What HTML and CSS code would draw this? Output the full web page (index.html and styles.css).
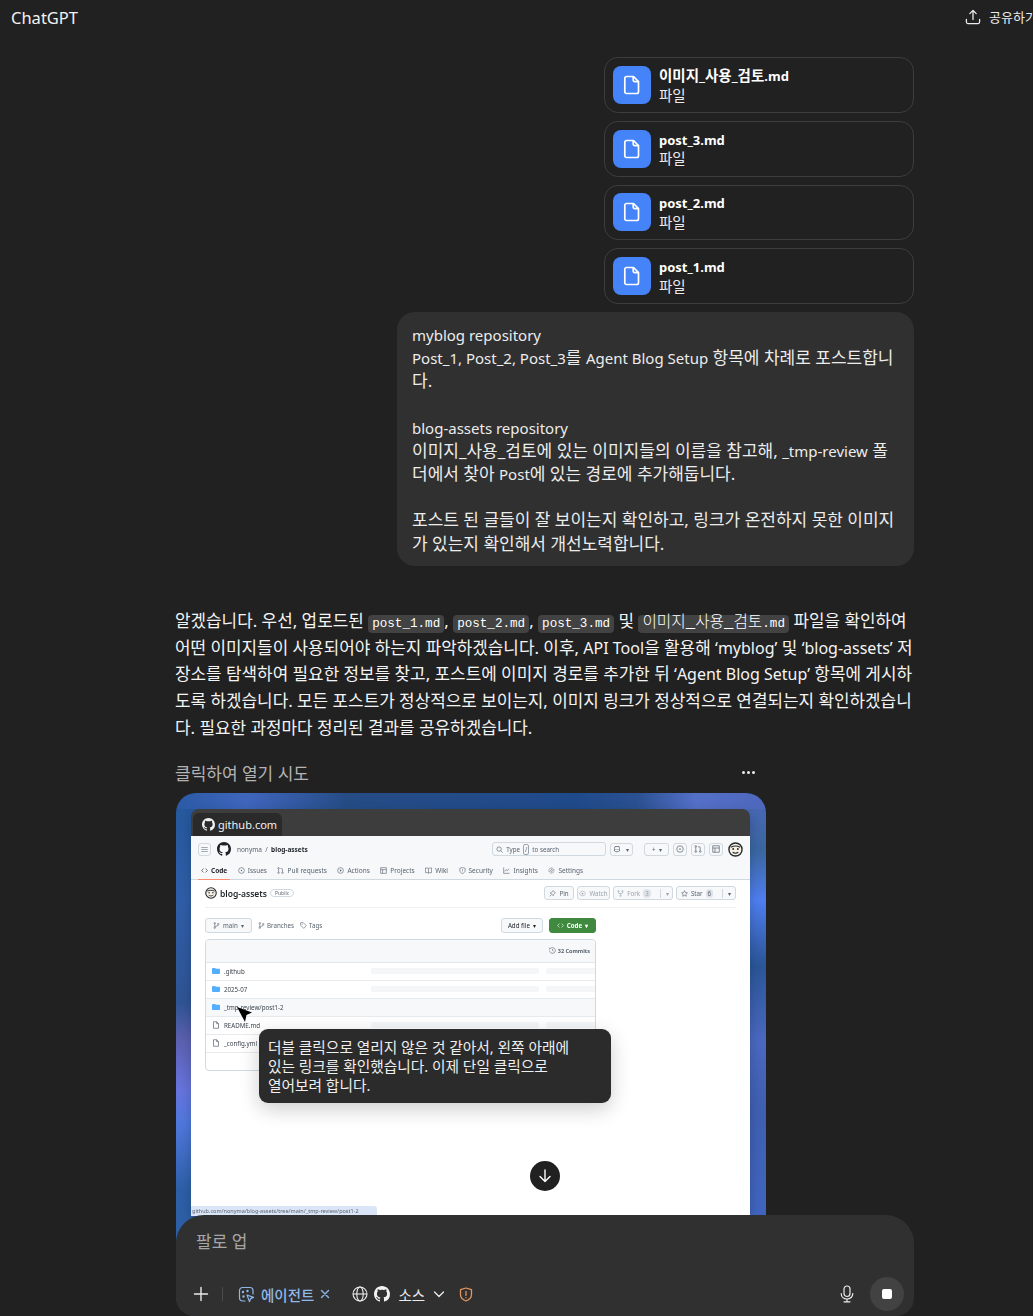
FILE: index.html
```html
<!DOCTYPE html>
<html lang="ko">
<head>
    <meta charset="UTF-8">
    <meta name="viewport" content="width=device-width, initial-scale=1.0">
    <title>ChatGPT</title>
    <link rel="stylesheet" href="styles.css">
</head>
<body>
    <svg class="sprite" width="0" height="0">
        <symbol id="i-github" viewBox="0 0 16 16"><path fill="currentColor" d="M8 0C3.58 0 0 3.58 0 8c0 3.54 2.29 6.53 5.47 7.59.4.07.55-.17.55-.38 0-.19-.01-.82-.01-1.49-2.01.37-2.53-.49-2.69-.94-.09-.23-.48-.94-.82-1.13-.28-.15-.68-.52-.01-.53.63-.01 1.08.58 1.23.82.72 1.21 1.87.87 2.33.66.07-.52.28-.87.51-1.07-1.78-.2-3.64-.89-3.64-3.95 0-.87.31-1.59.82-2.15-.08-.2-.36-1.02.08-2.12 0 0 .67-.21 2.2.82.64-.18 1.32-.27 2-.27s1.36.09 2 .27c1.53-1.04 2.2-.82 2.2-.82.44 1.1.16 1.92.08 2.12.51.56.82 1.27.82 2.15 0 3.07-1.87 3.75-3.65 3.95.29.25.54.73.54 1.48 0 1.07-.01 1.93-.01 2.2 0 .21.15.46.55.38A8 8 0 0 0 16 8c0-4.42-3.58-8-8-8z"/></symbol>
        <symbol id="i-file" viewBox="0 0 24 24"><path fill="none" stroke="currentColor" stroke-width="1.7" stroke-linejoin="round" d="M6.5 3.5h7l5 5.2v10.1a1.7 1.7 0 0 1-1.7 1.7H6.5a1.7 1.7 0 0 1-1.7-1.7V5.2a1.7 1.7 0 0 1 1.7-1.7z"/><path fill="none" stroke="currentColor" stroke-width="1.7" stroke-linejoin="round" d="M13.2 3.7v3.6a1.3 1.3 0 0 0 1.3 1.3h3.8"/></symbol>
        <symbol id="i-folder" viewBox="0 0 16 16"><path fill="currentColor" d="M1.75 2h4.2c.3 0 .55.12.75.33l1.1 1.17h6.45c.97 0 1.75.78 1.75 1.75v7c0 .97-.78 1.75-1.75 1.75H1.75C.78 14 0 13.22 0 12.25v-8.5C0 2.78.78 2 1.75 2z"/></symbol>
        <symbol id="i-doc" viewBox="0 0 16 16"><path fill="none" stroke="currentColor" stroke-width="1.4" d="M3 1.5h6.5l3.5 3.6v9.4H3zM9.3 1.7v3.6h3.6"/></symbol>
        <symbol id="i-face" viewBox="0 0 16 16"><circle cx="8" cy="8" r="7" fill="#f6f1e4" stroke="#24292f" stroke-width="1.5"/><path d="M3 5.5c3-1.5 7-1.5 10 0" fill="none" stroke="#24292f" stroke-width="1.2"/><circle cx="5.5" cy="7.5" r="1" fill="#24292f"/><circle cx="10.5" cy="7.5" r="1" fill="#24292f"/><path d="M5 11c2 1.2 4 1.2 6 0" fill="none" stroke="#24292f" stroke-width="1.1"/></symbol>
        <symbol id="n-code" viewBox="0 0 16 16"><path fill="none" stroke="currentColor" stroke-width="1.4" d="M5.5 3.5 1.5 8l4 4.5M10.5 3.5l4 4.5-4 4.5"/></symbol>
        <symbol id="n-issue" viewBox="0 0 16 16"><circle cx="8" cy="8" r="6.5" fill="none" stroke="currentColor" stroke-width="1.4"/><circle cx="8" cy="8" r="1.5" fill="currentColor"/></symbol>
        <symbol id="n-pr" viewBox="0 0 16 16"><g fill="none" stroke="currentColor" stroke-width="1.4"><circle cx="3.5" cy="3" r="1.7"/><circle cx="3.5" cy="13" r="1.7"/><circle cx="12.5" cy="13" r="1.7"/><path d="M3.5 5v6M12.5 11V5.5a2 2 0 0 0-2-2H8"/></g></symbol>
        <symbol id="n-play" viewBox="0 0 16 16"><circle cx="8" cy="8" r="6.5" fill="none" stroke="currentColor" stroke-width="1.4"/><path d="M6.5 5.2v5.6L11 8z" fill="currentColor"/></symbol>
        <symbol id="n-table" viewBox="0 0 16 16"><path fill="none" stroke="currentColor" stroke-width="1.4" d="M1.5 1.5h13v13h-13zM1.5 6h13M6 6v8.5"/></symbol>
        <symbol id="n-book" viewBox="0 0 16 16"><path fill="none" stroke="currentColor" stroke-width="1.4" d="M8 3.5C6.5 2.3 4 2 1 2.2v10.6c3-.2 5.5.1 7 1.2 1.5-1.1 4-1.4 7-1.2V2.2C12 2 9.5 2.3 8 3.5zM8 3.5V14"/></symbol>
        <symbol id="n-shield" viewBox="0 0 16 16"><path fill="none" stroke="currentColor" stroke-width="1.4" d="M8 1l6 2v5c0 3.5-3 6-6 7-3-1-6-3.5-6-7V3zM8 5v3.5M8 10.5v1"/></symbol>
        <symbol id="n-graph" viewBox="0 0 16 16"><path fill="none" stroke="currentColor" stroke-width="1.4" d="M1.5 1v13.5H15M4 10l3-4 3 2.5L14 4"/></symbol>
        <symbol id="n-gear" viewBox="0 0 16 16"><circle cx="8" cy="8" r="2.2" fill="none" stroke="currentColor" stroke-width="1.3"/><circle cx="8" cy="8" r="5.8" fill="none" stroke="currentColor" stroke-width="2" stroke-dasharray="2 1.6"/></symbol>
        <symbol id="n-branch" viewBox="0 0 16 16"><g fill="none" stroke="currentColor" stroke-width="1.4"><circle cx="4" cy="3" r="1.7"/><circle cx="4" cy="13" r="1.7"/><circle cx="12" cy="5" r="1.7"/><path d="M4 5v6M12 7c0 2.5-5 2-8 4"/></g></symbol>
        <symbol id="n-tag" viewBox="0 0 16 16"><path fill="none" stroke="currentColor" stroke-width="1.4" d="M1.5 1.5h6l7 7-6 6-7-7z"/><circle cx="5" cy="5" r="1" fill="currentColor"/></symbol>
        <symbol id="n-clock" viewBox="0 0 16 16"><path fill="none" stroke="currentColor" stroke-width="1.4" d="M1.5 8a6.5 6.5 0 1 0 2-4.7L1.5 5V1.5M8 4.5V8l2.5 1.5"/></symbol>
        <symbol id="n-search" viewBox="0 0 16 16"><circle cx="7" cy="7" r="5" fill="none" stroke="currentColor" stroke-width="1.5"/><path d="m11 11 4 4" stroke="currentColor" stroke-width="1.5"/></symbol>
        <symbol id="n-pin" viewBox="0 0 16 16"><path fill="none" stroke="currentColor" stroke-width="1.4" d="M9.5 1.5l5 5-2 1-2.5 3-.5 2.5L3 6.5l2.5-.5 3-2.5zM5.5 10.5l-4 4"/></symbol>
        <symbol id="n-eye" viewBox="0 0 16 16"><path fill="none" stroke="currentColor" stroke-width="1.4" d="M1 8c2-4 4.5-5 7-5s5 1 7 5c-2 4-4.5 5-7 5s-5-1-7-5z"/><circle cx="8" cy="8" r="2" fill="currentColor"/></symbol>
        <symbol id="n-fork" viewBox="0 0 16 16"><g fill="none" stroke="currentColor" stroke-width="1.4"><circle cx="3.5" cy="3" r="1.6"/><circle cx="12.5" cy="3" r="1.6"/><circle cx="8" cy="13" r="1.6"/><path d="M3.5 5v1.5A1.5 1.5 0 0 0 5 8h6a1.5 1.5 0 0 0 1.5-1.5V5M8 8v3"/></g></symbol>
        <symbol id="n-star" viewBox="0 0 16 16"><path fill="none" stroke="currentColor" stroke-width="1.4" d="m8 1.5 2 4.3 4.7.6-3.5 3.2.9 4.7L8 12l-4.1 2.3.9-4.7L1.3 6.4 6 5.8z"/></symbol>
        <symbol id="n-bot" viewBox="0 0 16 16"><path fill="none" stroke="currentColor" stroke-width="1.5" d="M4 3h8l1 4v5c-3 2-7 2-10 0V7z"/><circle cx="6" cy="9" r="1" fill="currentColor"/><circle cx="10" cy="9" r="1" fill="currentColor"/></symbol>
    </svg>

    <header class="topbar">
        <span class="brand">ChatGPT</span>
        <div class="share">
            <svg width="16" height="16" viewBox="0 0 16 16" fill="none" stroke="currentColor" stroke-width="1.3" stroke-linecap="round" stroke-linejoin="round"><path d="M8 10.6V1.6M4.8 4.6 8 1.4l3.2 3.2M1.4 10.5v2.6c0 .9.7 1.5 1.5 1.5h10.2c.9 0 1.5-.6 1.5-1.5v-2.6"/></svg>
            <span>공유하기</span>
        </div>
    </header>

    <main class="thread">
        <section class="attachments">
            <div class="file-card">
                <div class="file-icon"><svg width="24" height="24"><use href="#i-file"/></svg></div>
                <div class="file-meta"><strong>이미지_사용_검토<span class="en">.md</span></strong><span>파일</span></div>
            </div>
            <div class="file-card">
                <div class="file-icon"><svg width="24" height="24"><use href="#i-file"/></svg></div>
                <div class="file-meta"><strong class="en">post_3.md</strong><span>파일</span></div>
            </div>
            <div class="file-card">
                <div class="file-icon"><svg width="24" height="24"><use href="#i-file"/></svg></div>
                <div class="file-meta"><strong class="en">post_2.md</strong><span>파일</span></div>
            </div>
            <div class="file-card">
                <div class="file-icon"><svg width="24" height="24"><use href="#i-file"/></svg></div>
                <div class="file-meta"><strong class="en">post_1.md</strong><span>파일</span></div>
            </div>
        </section>

        <div class="bubble">
            <span class="en">myblog repository</span><br>
            <span class="en">Post_1, Post_2, Post_3</span>를 <span class="en">Agent Blog Setup</span> 항목에 차례로 포스트합니<br>
            다.<br>
            <br>
            <span class="en">blog-assets repository</span><br>
            이미지_사용_검토에 있는 이미지들의 이름을 참고해, <span class="en">_tmp-review</span> 폴<br>
            더에서 찾아 <span class="en">Post</span>에 있는 경로에 추가해둡니다.<br>
            <br>
            포스트 된 글들이 잘 보이는지 확인하고, 링크가 온전하지 못한 이미지<br>
            가 있는지 확인해서 개선노력합니다.
        </div>

        <p class="answer">
            알겠습니다. 우선, 업로드된 <code>post_1.md</code>, <code>post_2.md</code>, <code>post_3.md</code> 및 <code><span class="ko">이미지_사용_검토</span>.md</code> 파일을 확인하여<br>
            어떤 이미지들이 사용되어야 하는지 파악하겠습니다. 이후, <span class="en">API Tool</span>을 활용해 <span class="en">‘myblog’</span> 및 <span class="en">‘blog-assets’</span> 저<br>
            장소를 탐색하여 필요한 정보를 찾고, 포스트에 이미지 경로를 추가한 뒤 <span class="en">‘Agent Blog Setup’</span> 항목에 게시하<br>
            도록 하겠습니다. 모든 포스트가 정상적으로 보이는지, 이미지 링크가 정상적으로 연결되는지 확인하겠습니<br>
            다. 필요한 과정마다 정리된 결과를 공유하겠습니다.
        </p>

        <div class="agent-head">
            <span>클릭하여 열기 시도</span>
            <span class="dots"><i></i><i></i><i></i></span>
        </div>

        <section class="agent-card">
            <div class="browser">
                <div class="browser-bar">
                    <div class="browser-tab"><svg width="13" height="13"><use href="#i-github"/></svg><span>github.com</span></div>
                </div>
                <div class="gh">
                    <div class="gh-top">
                        <span class="gh-btn gh-menu">≡</span>
                        <svg class="gh-logo" width="14" height="14"><use href="#i-github"/></svg>
                        <span class="gh-crumb">nonyma &nbsp;/&nbsp; <b>blog-assets</b></span>
                        <span class="gh-search"><svg width="7" height="7"><use href="#n-search"/></svg>Type <kbd>/</kbd> to search</span>
                        <span class="gh-btn gh-copilot"><svg width="8" height="8"><use href="#n-bot"/></svg><u>▾</u></span>
                        <span class="gh-btn gh-plus">+ &nbsp;▾</span>
                        <span class="gh-btn gh-round"><svg width="8" height="8"><use href="#n-issue"/></svg></span>
                        <span class="gh-btn gh-round"><svg width="8" height="8"><use href="#n-pr"/></svg></span>
                        <span class="gh-btn gh-round"><svg width="8" height="8"><use href="#n-table"/></svg></span>
                        <svg class="gh-face" width="15" height="15"><use href="#i-face"/></svg>
                    </div>
                    <nav class="gh-nav">
                        <span class="active"><svg width="7" height="7"><use href="#n-code"/></svg>Code</span>
                        <span><svg width="7" height="7"><use href="#n-issue"/></svg>Issues</span>
                        <span><svg width="7" height="7"><use href="#n-pr"/></svg>Pull requests</span>
                        <span><svg width="7" height="7"><use href="#n-play"/></svg>Actions</span>
                        <span><svg width="7" height="7"><use href="#n-table"/></svg>Projects</span>
                        <span><svg width="7" height="7"><use href="#n-book"/></svg>Wiki</span>
                        <span><svg width="7" height="7"><use href="#n-shield"/></svg>Security</span>
                        <span><svg width="7" height="7"><use href="#n-graph"/></svg>Insights</span>
                        <span><svg width="7" height="7"><use href="#n-gear"/></svg>Settings</span>
                    </nav>
                    <div class="gh-repo">
                        <svg width="12" height="12"><use href="#i-face"/></svg>
                        <b>blog-assets</b>
                        <span class="gh-public">Public</span>
                        <div class="gh-actions">
                            <span class="gh-pill pin"><svg width="7" height="7"><use href="#n-pin"/></svg>Pin</span>
                            <span class="gh-pill watch"><svg width="7" height="7"><use href="#n-eye"/></svg>Watch</span>
                            <span class="gh-pill fork"><svg width="7" height="7"><use href="#n-fork"/></svg>Fork <em>3</em><u>▾</u></span>
                            <span class="gh-pill star"><svg width="7" height="7"><use href="#n-star"/></svg>Star <em>6</em><u>▾</u></span>
                        </div>
                    </div>
                    <div class="gh-tools">
                        <span class="gh-pill branch"><svg width="7" height="7"><use href="#n-branch"/></svg>main &nbsp;▾</span>
                        <span class="gh-link"><svg width="7" height="7"><use href="#n-branch"/></svg>Branches</span>
                        <span class="gh-link"><svg width="7" height="7"><use href="#n-tag"/></svg>Tags</span>
                        <span class="gh-pill addfile">Add file &nbsp;▾</span>
                        <span class="gh-pill code"><svg width="7" height="7"><use href="#n-code"/></svg>Code &nbsp;▾</span>
                    </div>
                    <div class="gh-table">
                        <div class="gh-thead"><svg width="7" height="7"><use href="#n-clock"/></svg>32 Commits</div>
                        <div class="gh-row"><svg class="blue" width="8" height="8"><use href="#i-folder"/></svg><span>.github</span><i></i><i></i></div>
                        <div class="gh-row"><svg class="blue" width="8" height="8"><use href="#i-folder"/></svg><span>2025-07</span><i></i><i></i></div>
                        <div class="gh-row hover"><svg class="blue" width="8" height="8"><use href="#i-folder"/></svg><span>_tmp-review/post1-2</span></div>
                        <div class="gh-row"><svg width="8" height="8"><use href="#i-doc"/></svg><span>README.md</span><i></i><i></i></div>
                        <div class="gh-row"><svg width="8" height="8"><use href="#i-doc"/></svg><span>_config.yml</span></div>
                    </div>
                    <div class="gh-status">github.com/nonyma/blog-assets/tree/main/_tmp-review/post1-2</div>
                </div>
            </div>

            <svg class="cursor" width="16" height="17" viewBox="0 0 16 17"><path fill="#000" d="M0 1 15 6.5 9.5 9 8 16z"/></svg>
            <div class="narration">더블 클릭으로 열리지 않은 것 같아서, 왼쪽 아래에<br>있는 링크를 확인했습니다. 이제 단일 클릭으로<br>열어보려 합니다.</div>
        </section>
    </main>

    <button class="scroll-down">
        <svg width="16" height="16" viewBox="0 0 16 16" fill="none" stroke="#fff" stroke-width="1.4" stroke-linecap="round" stroke-linejoin="round"><path d="M8 2v11.5M3 8.6l5 5 5-5"/></svg>
    </button>

    <footer class="composer">
        <div class="placeholder">팔로 업</div>
        <div class="tools">
            <svg class="plus" width="16" height="16" viewBox="0 0 16 16" stroke="#ececec" stroke-width="1.4" stroke-linecap="round"><path d="M8 1.5v13M1.5 8h13"/></svg>
            <span class="divider"></span>
            <div class="agent-chip">
                <svg width="17" height="17" viewBox="0 0 17 17" fill="none" stroke="currentColor" stroke-width="1.2" stroke-linecap="round" stroke-linejoin="round"><path d="M7 15H4.5a3 3 0 0 1-3-3V4.5a3 3 0 0 1 3-3H12a3 3 0 0 1 3 3V8"/><path d="M9 9l6.5 2.4-2.8 1.2-1.2 3z"/><circle cx="5" cy="6" r=".6"/><circle cx="9.5" cy="5" r=".6"/><circle cx="5.5" cy="10.5" r=".6"/></svg>
                <span>에이전트</span>
                <svg width="10" height="10" viewBox="0 0 10 10" stroke="currentColor" stroke-width="1.4" stroke-linecap="round"><path d="M1.5 1.5l7 7M8.5 1.5l-7 7"/></svg>
            </div>
            <div class="sources">
                <svg width="16" height="16" viewBox="0 0 16 16" fill="none" stroke="#ececec" stroke-width="1.1"><circle cx="8" cy="8" r="7"/><ellipse cx="8" cy="8" rx="3.2" ry="7"/><path d="M1 8h14"/></svg>
                <svg class="gh-mark" width="16" height="16"><use href="#i-github"/></svg>
                <span class="src-label">소스</span>
                <svg width="12" height="12" viewBox="0 0 12 12" fill="none" stroke="#ececec" stroke-width="1.3" stroke-linecap="round" stroke-linejoin="round"><path d="M1.5 4l4.5 4.5L10.5 4"/></svg>
            </div>
            <svg class="shield" width="14" height="15" viewBox="0 0 14 15" fill="none" stroke="#e2955e" stroke-width="1.3" stroke-linecap="round" stroke-linejoin="round"><path d="M7 1l5.5 1.6v5.2c0 3.2-2.6 5.2-5.5 6.2-2.9-1-5.5-3-5.5-6.2V2.6z"/><path d="M7 4.4v4M7 10.6v.1"/></svg>
            <svg class="mic" width="14" height="18" viewBox="0 0 14 18" fill="none" stroke="#ececec" stroke-width="1.2" stroke-linecap="round"><rect x="4" y="1" width="6" height="10.5" rx="3"/><path d="M1.2 8.5c0 3.3 2.5 5.5 5.8 5.5s5.8-2.2 5.8-5.5M7 14v2.5M4 16.8h6"/></svg>
            <button class="stop"><i></i></button>
        </div>
    </footer>
</body>
</html>
```

FILE: styles.css
```css
* {
    box-sizing: border-box;
}
html, body {
    margin: 0;
    height: 100%;
}
body {
    position: relative;
    height: 1316px;
    overflow: hidden;
    background-color: #212121;
    color: #ececec;
    font-family: "Noto Sans", "Noto Sans CJK KR", sans-serif;
    font-size: 15px;
}
.sprite {
    position: absolute;
}
.en {
    font-size: 15px;
    line-height: 1;
}

/* top bar */
.topbar {
    display: flex;
    justify-content: space-between;
    align-items: center;
    height: 35px;
    padding-left: 11px;
}
.brand {
    font-size: 16.5px;
    color: #f2f2f2;
}
.share {
    display: flex;
    align-items: center;
    gap: 8px;
    width: 68px;
    flex: none;
    margin-top: -2px;
    overflow: hidden;
    white-space: nowrap;
    font-size: 13px;
}
.share svg {
    flex: none;
}

/* thread column */
.thread {
    display: flex;
    flex-direction: column;
    width: 739px;
    margin-left: 175px;
    padding-top: 22.2px;
}
.attachments {
    display: flex;
    flex-direction: column;
    align-items: flex-end;
    gap: 8px;
}
.file-card {
    display: flex;
    align-items: center;
    gap: 8px;
    width: 310px;
    height: 55.7px;
    padding-left: 8px;
    border: 1px solid #3d3d3d;
    border-radius: 14px;
}
.file-icon {
    display: flex;
    align-items: center;
    justify-content: center;
    width: 38px;
    height: 38px;
    border-radius: 8px;
    background-color: #4483f8;
    color: #fff;
}
.file-meta {
    display: flex;
    flex-direction: column;
    font-size: 14.5px;
    line-height: 18.5px;
}
.file-meta strong {
    color: #fff;
    font-weight: 700;
}
.file-meta .en {
    font-size: 13px;
    line-height: 18.5px;
}
.file-meta strong.en {
    margin-top: 1px;
}
.bubble {
    align-self: flex-end;
    width: 517px;
    height: 254px;
    margin-top: 7.8px;
    padding: 11px 15px;
    border-radius: 18px;
    background-color: #303030;
    font-size: 17px;
    line-height: 23.2px;
    white-space: nowrap;
}
.answer {
    margin: 42px 0 0;
    font-size: 16.9px;
    line-height: 26.8px;
    white-space: nowrap;
    color: #f4f4f4;
}
.answer .en {
    font-size: 16px;
}
.answer code {
    padding: 2px 4px;
    border-radius: 4px;
    background-color: #424242;
    color: #fff;
    font-family: "Liberation Mono", "Noto Sans CJK KR", monospace;
    font-size: 12.6px;
    line-height: 1;
}
.answer code .ko {
    font-size: 15.7px;
    font-weight: 300;
    line-height: 1;
}
.agent-head {
    display: flex;
    justify-content: space-between;
    align-items: center;
    width: 589px;
    height: 24px;
    margin-top: 19px;
    padding-right: 9px;
    color: #b4b4b4;
    font-size: 17px;
}
.dots {
    display: flex;
    gap: 2px;
}
.dots i {
    width: 3px;
    height: 3px;
    border-radius: 50%;
    background-color: #ececec;
}

/* agent preview, sides sampled from the shot */
.agent-card {
    position: relative;
    width: 590px;
    height: 523px;
    margin-top: 8px;
    margin-left: 1px;
    padding: 16px 15px;
    border-radius: 20px;
    background-color: #1f4c8c;
    background-repeat: no-repeat;
    background-image:
        linear-gradient(to right, #2a5aa5 0, #3f66bd 70px, #264c86 170px, #1f4a8a 400px, #2a5090 460px, #5470c8 520px, #4d67bb 100%),
        linear-gradient(to bottom, #24579a 0, #2f5ea8 107px, #2f5494 210px, #5c60b0 247px, #6674dc 297px, #4f78dd 330px, #2d5fa6 397px, #2d5fa6 100%),
        linear-gradient(to bottom, #4d67bb 0, #3a669f 57px, #4f7ef0 107px, #2a5596 173px, #4a68c0 247px, #3f5fb0 317px, #4065c0 423px, #4065c0 100%);
    background-size: 100% 16px, 50% 100%, 50% 100%;
    background-position: 0 0, 0 0, 100% 0;
}
.browser {
    width: 559px;
    border-radius: 8px 8px 0 0;
    overflow: hidden;
    box-shadow: 0 4px 12px rgba(0, 0, 0, 0.2);
}
.browser-bar {
    display: flex;
    align-items: flex-end;
    height: 27px;
    padding-left: 2px;
    background-color: #3d3d3d;
}
.browser-tab {
    display: flex;
    align-items: center;
    gap: 3px;
    width: 89px;
    height: 23px;
    padding-left: 9px;
    border-radius: 6px 6px 0 0;
    background-color: #2a2a2a;
    color: #f0f0f0;
    font-size: 11px;
}

/* github page inside the browser */
.gh {
    position: relative;
    height: 380px;
    background-color: #fff;
    color: #59636e;
    font-size: 6.2px;
    filter: blur(0.25px);
}
.gh b {
    color: #1f2328;
}
.gh svg {
    flex: none;
}
.gh-top {
    display: flex;
    align-items: center;
    height: 27px;
    padding: 0 7px;
    background-color: #f6f8fa;
    gap: 4px;
}
.gh-btn {
    display: flex;
    align-items: center;
    justify-content: center;
    height: 13px;
    border: 1px solid #d1d9e0;
    border-radius: 3px;
    background-color: #f6f8fa;
}
.gh-btn u {
    text-decoration: none;
}
.gh-menu {
    width: 13px;
    font-size: 9px;
}
.gh-logo {
    margin-left: 2px;
    color: #1f2328;
}
.gh-crumb {
    margin-left: 2px;
    width: 253px;
    font-size: 6.5px;
}
.gh-search {
    display: flex;
    align-items: center;
    gap: 3px;
    width: 114px;
    height: 14px;
    padding-left: 3px;
    border: 1px solid #d1d9e0;
    border-radius: 3px;
}
.gh-search kbd {
    padding: 0 1px;
    border: 1px solid #9aa4ae;
    border-radius: 2px;
    font-family: inherit;
}
.gh-copilot {
    gap: 5px;
    width: 24px;
}
.gh-plus {
    width: 25px;
    margin-left: 7px;
}
.gh-round {
    width: 14px;
}
.gh-face {
    margin-left: 1px;
}
.gh-nav {
    display: flex;
    align-items: center;
    gap: 10.5px;
    height: 17px;
    padding-left: 10px;
    background-color: #f6f8fa;
    border-bottom: 1px solid #d1d9e0;
    font-size: 6.5px;
    white-space: nowrap;
}
.gh-nav span {
    display: flex;
    align-items: center;
    gap: 3px;
}
.gh-nav .active {
    position: relative;
    color: #1f2328;
    font-weight: 700;
}
.gh-nav .active::after {
    content: "";
    position: absolute;
    left: -3px;
    right: -3px;
    bottom: -5px;
    height: 1px;
    background-color: #fd8c73;
}
.gh-repo {
    display: flex;
    align-items: center;
    gap: 3px;
    height: 28px;
    margin: 0 14px;
    border-bottom: 1px solid #eef0f2;
}
.gh-repo b {
    font-size: 8.5px;
    font-weight: 600;
}
.gh-public {
    padding: 0 4px;
    border: 1px solid #d1d9e0;
    border-radius: 6px;
    font-size: 5px;
}
.gh-actions {
    display: flex;
    gap: 3px;
    margin-left: auto;
}
.gh-pill {
    display: flex;
    align-items: center;
    justify-content: center;
    gap: 3px;
    height: 14px;
    border: 1px solid #d1d9e0;
    border-radius: 3px;
    background-color: #f6f8fa;
    white-space: nowrap;
}
.gh-pill em {
    padding: 0 2px;
    border-radius: 4px;
    background-color: #dfe3e8;
    font-style: normal;
}
.gh-pill u {
    margin-left: 6px;
    padding-left: 5px;
    border-left: 1px solid #d1d9e0;
    text-decoration: none;
}
.pin { width: 30px; }
.watch { width: 33px; color: #9aa4ae; }
.fork { width: 60px; color: #9aa4ae; }
.star { width: 60px; }
.gh-tools {
    display: flex;
    align-items: flex-start;
    gap: 6px;
    height: 31px;
    padding: 10px 154px 0 14px;
}
.branch {
    width: 47px;
    height: 15px;
}
.gh-link {
    display: flex;
    align-items: center;
    gap: 2px;
    height: 15px;
}
.addfile {
    width: 42px;
    height: 15px;
    margin-left: auto;
    color: #1f2328;
}
.code {
    width: 47px;
    height: 15px;
    background-color: #3f8a3f;
    border-color: #3f8a3f;
    color: #fff;
    font-weight: 700;
}
.gh-table {
    width: 391px;
    height: 132px;
    margin-left: 14px;
    border: 1px solid #d1d9e0;
    border-radius: 4px;
    overflow: hidden;
}
.gh-thead {
    display: flex;
    align-items: center;
    justify-content: flex-end;
    gap: 2px;
    height: 23px;
    padding-right: 5px;
    background-color: #f6f8fa;
    border-bottom: 1px solid #e3e7ea;
    font-size: 5.5px;
    font-weight: 700;
}
.gh-row {
    display: flex;
    align-items: center;
    height: 18px;
    padding-left: 6px;
    gap: 4px;
    border-bottom: 1px solid #e8ebee;
    color: #3b434b;
    font-size: 6.2px;
}
.gh-row span {
    flex: none;
    width: 143px;
}
.gh-row.hover {
    background-color: #f6f8fa;
}
.gh-row svg {
    color: #59636e;
}
.gh-row svg.blue {
    color: #54aeff;
}
.gh-row i {
    flex: none;
    height: 6px;
    width: 168px;
    background-color: #f4f6f8;
    border-radius: 2px;
}
.gh-row i:last-child {
    width: 60px;
    margin-left: 3px;
}
.gh-status {
    position: absolute;
    left: 0;
    bottom: 0;
    width: 186px;
    height: 10px;
    padding-left: 1px;
    background-color: #dbe5f8;
    border-top-right-radius: 3px;
    font-size: 5.5px;
    line-height: 10px;
    white-space: nowrap;
}
.cursor {
    position: absolute;
    left: 61px;
    top: 213px;
}
.narration {
    position: absolute;
    left: 83px;
    top: 236px;
    width: 352px;
    height: 74px;
    padding: 9px;
    border-radius: 9px;
    background-color: #2b2b2b;
    color: #f0f0f0;
    font-size: 14.7px;
    line-height: 19px;
    white-space: nowrap;
    box-shadow: 0 6px 20px rgba(0, 0, 0, 0.2);
}

/* overlays */
.scroll-down {
    position: absolute;
    left: 530px;
    top: 1161px;
    display: flex;
    align-items: center;
    justify-content: center;
    width: 30px;
    height: 30px;
    padding: 0;
    border: none;
    border-radius: 50%;
    background-color: #212121;
}
.composer {
    position: absolute;
    left: 176px;
    top: 1215px;
    width: 738px;
    height: 101px;
    border-radius: 28px 28px 18px 18px;
    background-color: #303030;
}
.placeholder {
    padding: 13px 0 0 20px;
    color: #a6a6a6;
    font-size: 17px;
}
.tools {
    display: flex;
    align-items: center;
    position: absolute;
    left: 17px;
    right: 10px;
    top: 62px;
    height: 34px;
}
.divider {
    width: 1px;
    height: 14px;
    margin: 0 15px 0 13px;
    background-color: #4a4a4a;
}
.agent-chip {
    display: flex;
    align-items: center;
    gap: 6px;
    color: #8fb8ea;
    font-size: 14.5px;
    font-weight: 500;
}
.sources {
    display: flex;
    align-items: center;
    gap: 6px;
    margin-left: 22px;
    font-size: 14.5px;
}
.src-label {
    margin: 0 2px;
}
.gh-mark {
    color: #f2f2f2;
}
.shield {
    margin-left: 14px;
}
.mic {
    margin-left: auto;
    margin-right: 16px;
}
.stop {
    display: flex;
    align-items: center;
    justify-content: center;
    width: 34px;
    height: 34px;
    padding: 0;
    border: none;
    border-radius: 50%;
    background-color: #424242;
}
.stop i {
    width: 10px;
    height: 10px;
    border-radius: 2px;
    background-color: #fff;
}
```
